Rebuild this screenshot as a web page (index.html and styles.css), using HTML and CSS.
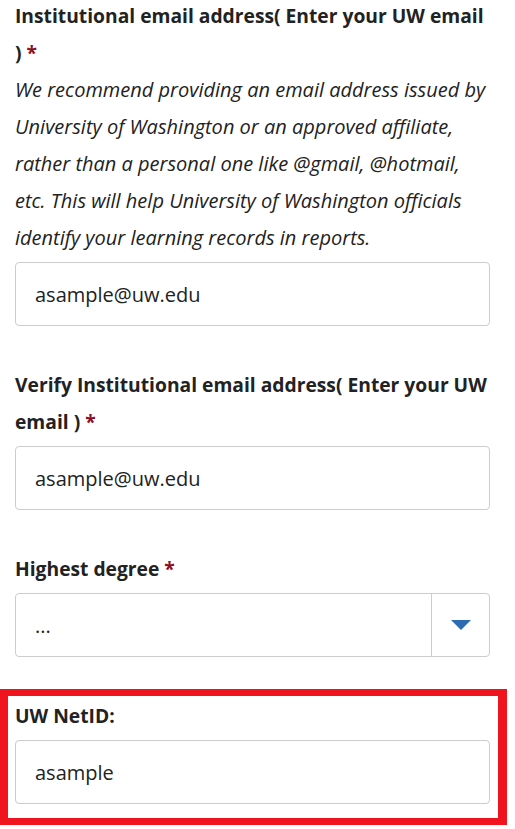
FILE: index.html
```html
<!DOCTYPE html>
<html lang="en">

<head>
    <meta charset="UTF-8" />
    <title>Profile</title>
    <link rel="stylesheet" href="styles.css">
</head>

<body>
    <form class="profile-form">
        <!-- 机构邮箱 -->
        <div class="form-group">
            <label class="form-label">Institutional email address( Enter your UW email ) <span class="required">*</span></label>
            <p class="help-text">We recommend providing an email address issued by University of Washington or an approved affiliate, rather than a personal one like @gmail, @hotmail, etc. This will help University of Washington officials identify your learning records in reports.</p>
            <input class="form-control" type="text" value="asample@uw.edu" />
        </div>

        <div class="form-group">
            <label class="form-label">Verify Institutional email address( Enter your UW email ) <span class="required">*</span></label>
            <input class="form-control" type="text" value="asample@uw.edu" />
        </div>

        <!-- 下拉框 -->
        <div class="form-group">
            <label class="form-label">Highest degree <span class="required">*</span></label>
            <div class="select-box">
                <span class="select-value">...</span>
                <span class="select-arrow">
                    <svg width="20" height="10" viewBox="0 0 20 10"><path d="M0 0H20L10 10Z" fill="#2b6cb3" /></svg>
                </span>
            </div>
        </div>

        <div class="form-group highlight">
            <label class="form-label">UW NetID:</label>
            <input class="form-control" type="text" value="asample" />
        </div>
    </form>
</body>

</html>
```

FILE: styles.css
```css
* {
    margin: 0;
    padding: 0;
    box-sizing: border-box;
}

body {
    font-family: "Open Sans", "Liberation Sans", sans-serif;
    color: #222;
    background: #fff;
}

.profile-form {
    width: 490px;
    margin-top: -3px;
    padding-left: 15px;
}

.form-group {
    margin-bottom: 40px;
}

.form-label {
    display: block;
    font-size: 19.25px;
    font-weight: 700;
    line-height: 37px;
    margin-bottom: 6px;
}

.form-label .required {
    color: #8a0f23;
}

.help-text {
    font-size: 20px;
    font-style: italic;
    line-height: 37px;
    margin-top: -6px;
    margin-bottom: 6px;
}

.form-control {
    display: block;
    width: 100%;
    height: 64px;
    padding: 0 19px;
    border: 1px solid #ccc;
    border-radius: 4px;
    font-family: inherit;
    font-size: 20px;
    color: #222;
    background: #fff;
    outline: none;
}

.select-box {
    display: flex;
    height: 64px;
    border: 1px solid #ccc;
    border-radius: 4px;
}

.select-value {
    flex: 1;
    display: flex;
    align-items: center;
    padding-left: 19px;
    font-size: 20px;
}

.select-arrow {
    width: 58px;
    display: flex;
    align-items: center;
    justify-content: center;
    border-left: 1px solid #ccc;
}

.form-group.highlight {
    margin: -8px -17px 0 -15px;
    padding: 1px 8px 14px 7px;
    border-style: solid;
    border-color: #f0141e;
    border-width: 7px 9px 7px 8px;
}
```
